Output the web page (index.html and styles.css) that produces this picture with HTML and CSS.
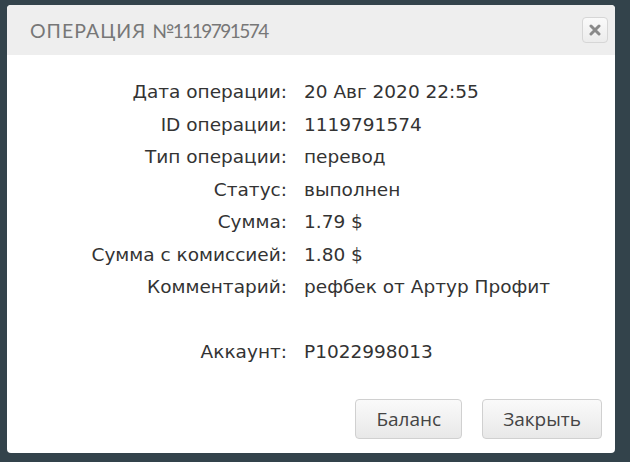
FILE: index.html
```html
<!DOCTYPE html>
<html lang="ru">
<head>
    <meta charset="UTF-8">
    <title>Операция №1119791574</title>
    <link rel="stylesheet" href="styles.css">
</head>
<body>
    <div class="dialog">
        <div class="dialog-header">
            <h2 class="dialog-title">Операция <span class="dialog-num">№1119791574</span></h2>
            <button class="dialog-close" title="Закрыть">
                <svg width="12" height="12" viewBox="0 0 12 12"><path d="M2 2 L10 10 M10 2 L2 10" stroke="#8a8a8a" stroke-width="3" stroke-linecap="round"/></svg>
            </button>
        </div>
        <div class="dialog-body">
            <div class="info">
                <div class="info-label">Дата операции:</div>
                <div class="info-value">20 Авг 2020 22:55</div>
                <div class="info-label">ID операции:</div>
                <div class="info-value">1119791574</div>
                <div class="info-label">Тип операции:</div>
                <div class="info-value">перевод</div>
                <div class="info-label">Статус:</div>
                <div class="info-value">выполнен</div>
                <div class="info-label">Сумма:</div>
                <div class="info-value">1.79 $</div>
                <div class="info-label">Сумма с комиссией:</div>
                <div class="info-value">1.80 $</div>
                <div class="info-label">Комментарий:</div>
                <div class="info-value">рефбек от Артур Профит</div>
                <div class="info-label">&nbsp;</div>
                <div class="info-value">&nbsp;</div>
                <div class="info-label">Аккаунт:</div>
                <div class="info-value">P1022998013</div>
            </div>
        </div>
        <div class="dialog-footer">
            <button class="btn">Баланс</button>
            <button class="btn">Закрыть</button>
        </div>
    </div>
</body>
</html>
```

FILE: styles.css
```css
html, body {
    height: 100%;
}
body {
    margin: 0;
    padding: 5px 15px 9px 7px;
    box-sizing: border-box;
    background-color: #33434b;
    font-family: "DejaVu Sans", sans-serif;
}
.dialog {
    background-color: #fff;
    border-radius: 4px;
    height: 100%;
    display: flex;
    flex-direction: column;
    overflow: hidden;
}
.dialog-header {
    background-color: #eeeeee;
    height: 50px;
    display: flex;
    align-items: center;
    justify-content: space-between;
    padding: 0 7px 0 23px;
}
.dialog-title {
    margin: 0;
    font-family: "Lato", sans-serif;
    font-weight: normal;
    font-size: 19.5px;
    letter-spacing: 1px;
    text-transform: uppercase;
    color: #777;
}
.dialog-num {
    font-size: 19px;
    letter-spacing: -1.5px;
}
.dialog-close {
    width: 26px;
    height: 26px;
    padding: 0;
    border: 1px solid #d6d6d6;
    border-radius: 4px;
    background: linear-gradient(#fafafa, #ececec);
    display: flex;
    align-items: center;
    justify-content: center;
}
.dialog-body {
    flex: 1;
    padding-top: 21px;
}
.info {
    display: grid;
    grid-template-columns: 280px 1fr;
    column-gap: 17px;
    font-size: 18.5px;
    line-height: 32.5px;
    color: #333;
}
.info-label {
    text-align: right;
}
.dialog-footer {
    display: flex;
    justify-content: flex-end;
    gap: 20px;
    padding: 0 13px 14px 0;
}
.btn {
    height: 40px;
    padding: 0 20px;
    font-family: "Open Sans", sans-serif;
    font-size: 19px;
    color: #444;
    border: 1px solid #d0d0d0;
    border-radius: 4px;
    background: linear-gradient(#fafafa, #e8e8e8);
}
```
